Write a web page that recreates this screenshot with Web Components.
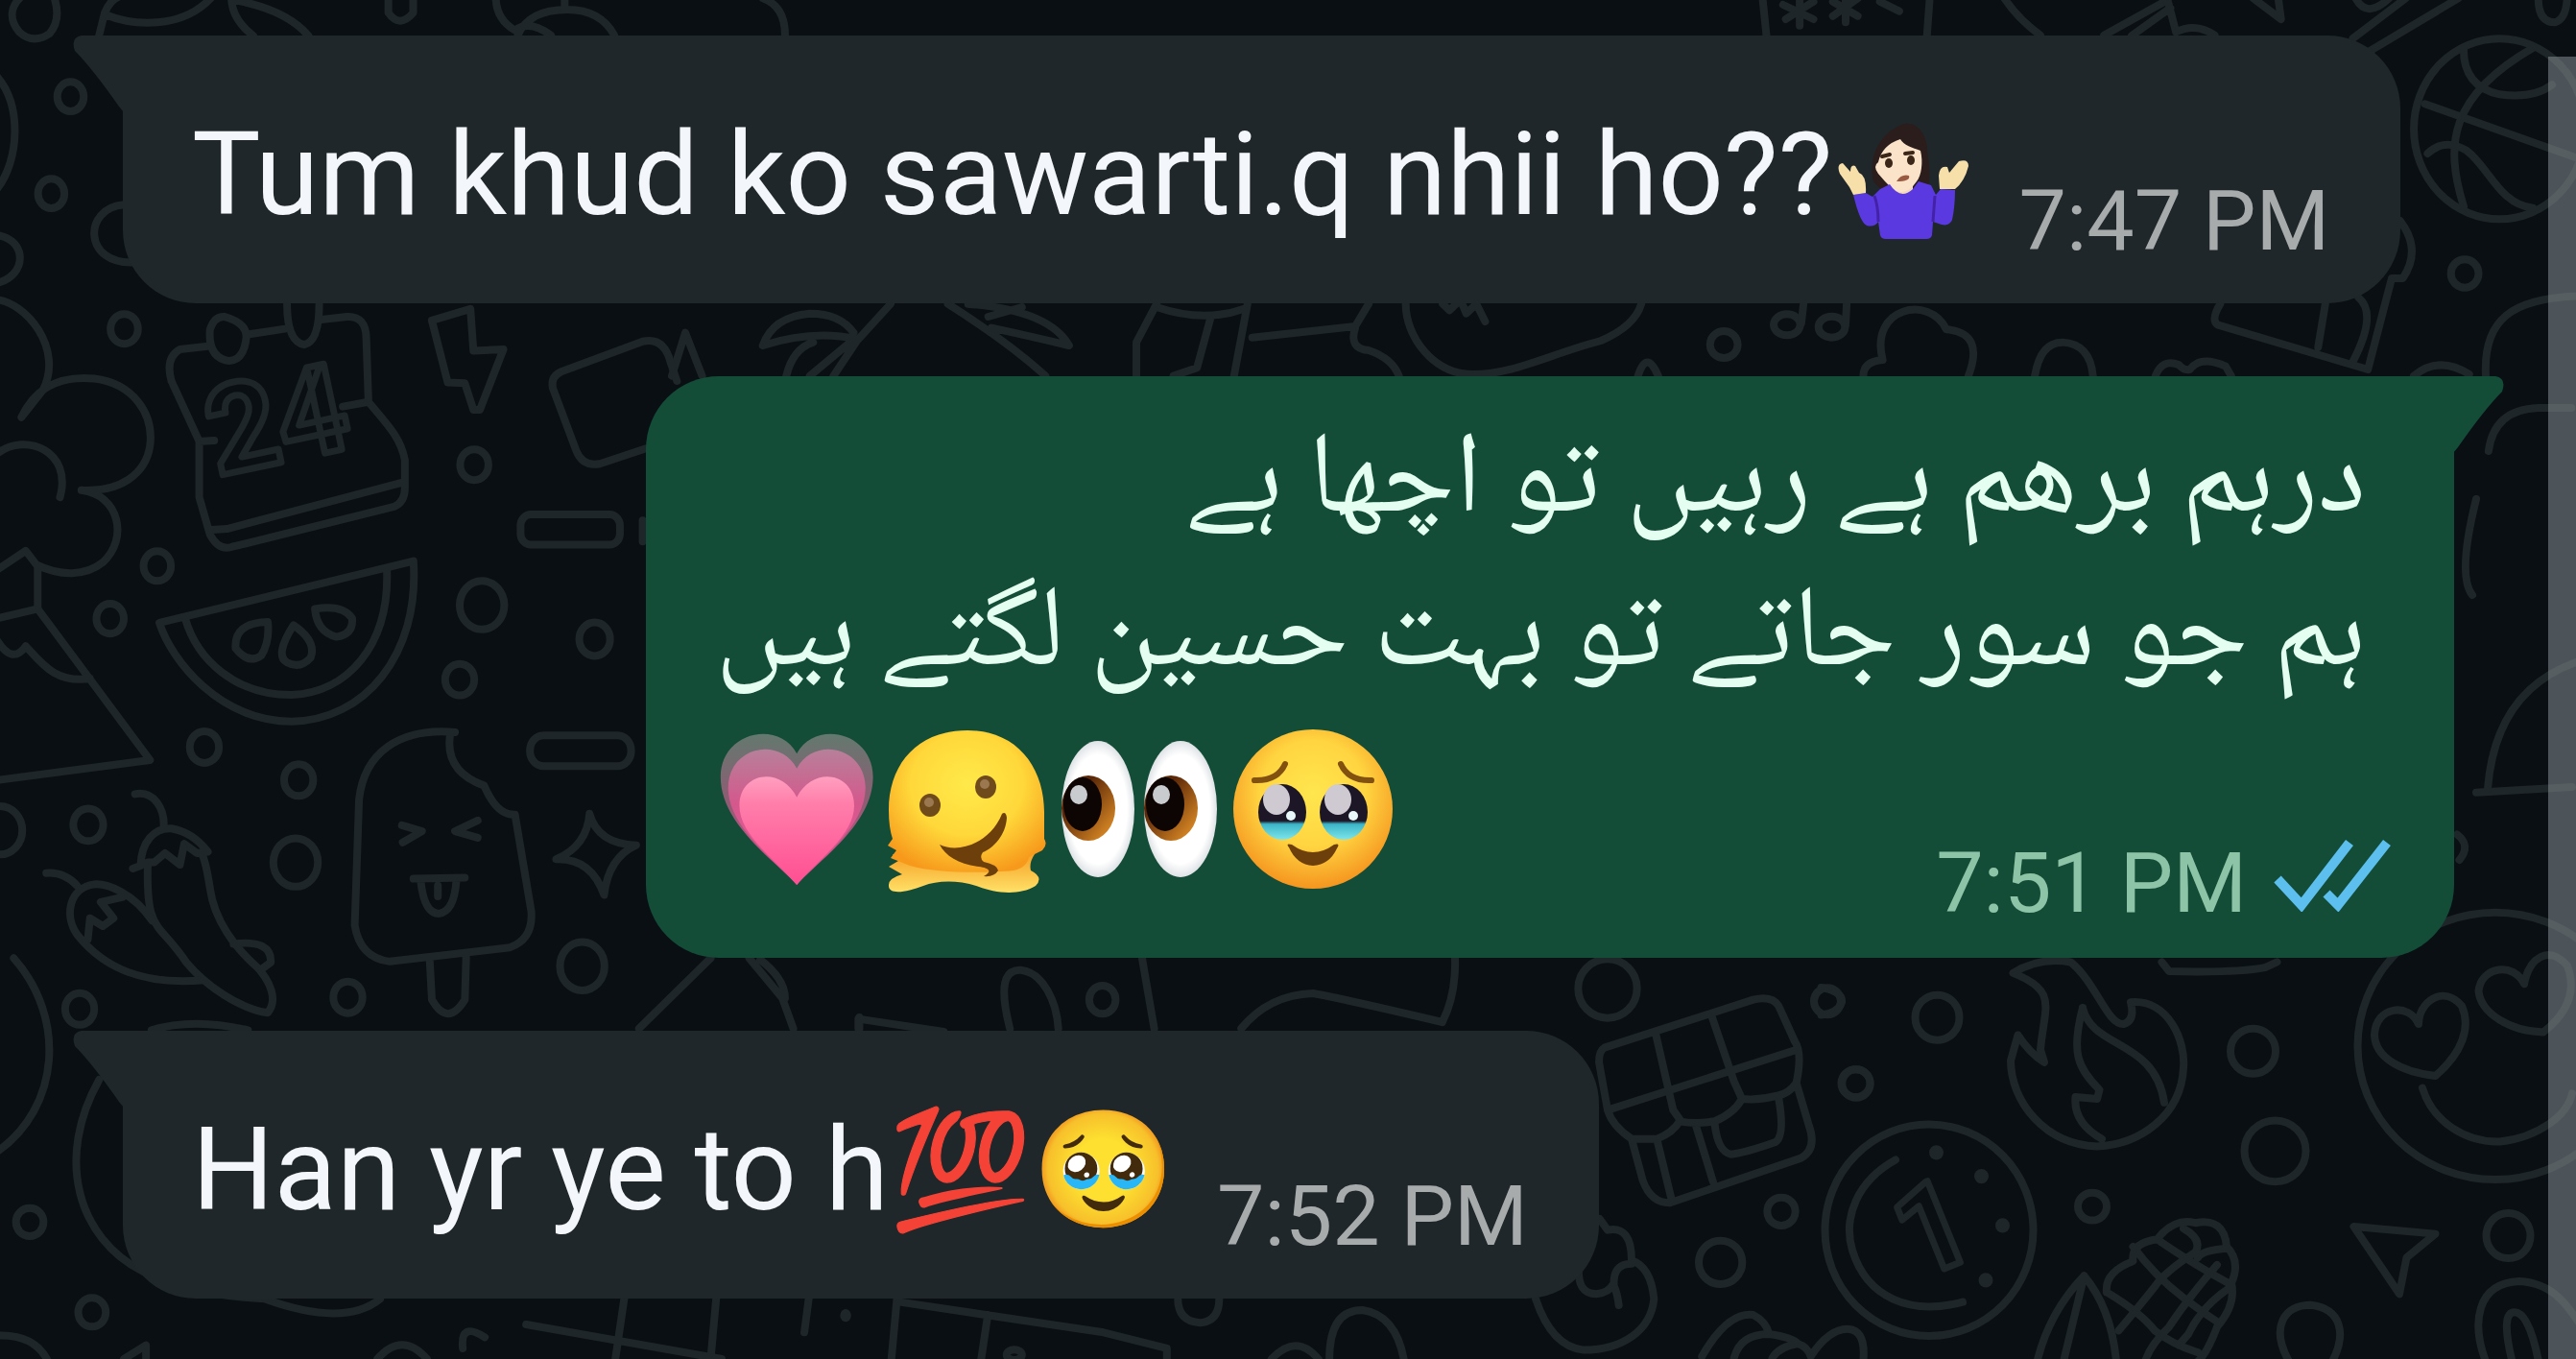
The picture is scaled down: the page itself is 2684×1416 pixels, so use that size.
<!DOCTYPE html>
<html lang="en">
<head>
<meta charset="utf-8">
<meta name="viewport" content="width=device-width, initial-scale=1">
<title>Chat</title>
<style>
  body {
    margin: 0;
    background: #0a0f13;
  }
</style>
</head>
<body>
<chat-screen>
  <chat-bubble side="in" time="7:47 PM">Tum khud ko sawarti.q nhii ho??<big-emoji name="shrug" inline></big-emoji></chat-bubble>
  <chat-bubble side="out" time="7:51 PM" read lang="ur">
    <div dir="rtl">درہم برھم ہے رہیں تو اچھا ہے</div>
    <div dir="rtl">ہم جو سور جاتے تو بہت حسین لگتے ہیں</div>
    <big-emoji slot="emoji" name="heart"></big-emoji>
    <big-emoji slot="emoji" name="melting"></big-emoji>
    <big-emoji slot="emoji" name="eyes"></big-emoji>
    <big-emoji slot="emoji" name="tears"></big-emoji>
  </chat-bubble>
  <chat-bubble side="in" time="7:52 PM">Han yr ye to h💯🥹</chat-bubble>
</chat-screen>

<script>
class ChatWallpaper extends HTMLElement {
  constructor() {
    super();

    const styles = `
    :host {
      display: block;
      overflow: hidden;
    }
    svg {
      display: block;
      width: 100%;
      height: 100%;
      fill: none;
      stroke: #1f262a;
      stroke-width: 8;
      stroke-linecap: round;
      stroke-linejoin: round;
    }
    path, circle, ellipse, rect {
      vector-effect: non-scaling-stroke;
    }
    .dot {
      fill: #1f262a;
      stroke: none;
    }
    text {
      font-family: Roboto, sans-serif;
      font-weight: 700;
      stroke-width: 7;
    }
    `;

    this.attachShadow({ mode: 'open' }).innerHTML = `<style>${styles}</style>
    <svg viewBox="0 0 2684 1416" preserveAspectRatio="xMidYMid slice" aria-hidden="true">
      <!-- top left -->
      <g transform="scale(.574 .3333)">
        <path d="M38-10C20 20 15 60 35 100Q60 140 90 105Q112 60 98-10M180 110L190 40Q200 0 215-10M190 45C240 80 330 95 385-10M420-10Q420 60 460 112M425 0Q520 30 560 112M705-10V40Q725 90 750 40V-10M900-10Q900 60 935 95Q960 60 1000 110M1025-10V25M940 110Q960 30 1030 30Q1090 30 1115 110M1385-5Q1425 20 1425 110"/>
        <ellipse cx="128" cy="302" rx="24" ry="46"/>
        <ellipse cx="93" cy="605" rx="24" ry="46"/>
        <path d="M-5 240C40 330 35 500-5 590M225 640C150 650 150 830 245 820M-5 735C50 750 50 860-5 885"/>
      </g>
      <!-- top right: dice, pencil, basketball, popcorn, notes -->
      <g transform="translate(1780) scale(.5765 .3333)">
        <path d="M98-5L105 112M400-5L395 112M135 15L190 60M190 5L140 60M165-5V80M225 5L270 50M270-5L225 50M248-5V70M310 5L345 35M535-5Q560 60 600 110M715 110L830 0L845 100Q880 70 915 110M765 112L835 25M985-5L1035 60L1030-5M1165 120L1260-5M1190 165L1355-5M1170-5Q1190 60 1230-5M1500-5Q1500 70 1530 70Q1550 60 1552-5"/>
        <ellipse cx="1430" cy="403" rx="155" ry="282"/>
        <path d="M1365 155Q1365 270 1430 295Q1490 310 1525 265M1490 150C1340 300 1330 450 1365 645M1295 325L1580 500M1300 480Q1330 430 1370 470C1410 520 1430 640 1490 650"/>
        <ellipse cx="1367" cy="855" rx="25" ry="44"/>
        <path d="M1250 690Q1290 780 1255 870H1235L1192 1155L920 1015Q908 1000 925 950M1102 1085L1115 950M1165 1130Q1210 980 1175 930"/>
        <ellipse cx="142" cy="1015" rx="24" ry="33"/>
        <ellipse cx="223" cy="1022" rx="24" ry="33"/>
        <path d="M172 950L168 1010M250 950L248 1015M280 1175Q280 1130 315 1125C290 960 400 920 430 1030Q500 1040 470 1175M590 1175Q600 1070 640 1070Q690 1075 695 1175M808 1175Q820 1120 850 1140Q860 1160 870 1155Q890 1110 935 1145L945 1175M1275 1175Q1320 1110 1375 1170M1405 1175C1400 1000 1450 930 1580 925M1410 1410Q1420 1280 1500 1275H1560"/>
        <ellipse cx="28" cy="1077" rx="25" ry="42"/>
      </g>
      <!-- strip between the first two bubbles: palms, trousers -->
      <g transform="translate(700 300) scale(.7015 .3333)">
        <path d="M0 275L20 140L45 275M325 50L275 165L240 275M270 140Q250 80 205 80Q150 90 135 180Q210 130 275 160M170 275Q180 190 210 170M205 275L265 170M410 50Q500 170 555 275M440 50Q560 70 590 180Q530 150 475 125M470 90L520 60M720 50L690 170V275M720 60Q790 110 850 65M800 95L780 250L745 275M855 50L835 275M862 155L1015 120L1035 50M1015 125Q1005 190 1035 195Q1070 220 1080 275M1090 50C1090 150 1130 270 1190 270C1250 270 1300 210 1380 165Q1430 120 1440 50M1145 50L1155 70L1165 50M1175 55L1180 80L1195 50L1208 105M1435 275Q1448 190 1465 275"/>
      </g>
      <!-- left: tree, calendar, bolt, melon, chillies, ice cream -->
      <g transform="translate(0 300) scale(.4464 .4847)">
        <path d="M-10 25C60 30 150 130 100 220L50 278C90 200 160 190 220 195C310 205 360 270 350 340C340 400 280 440 190 435C280 445 300 540 240 590C200 620 140 620 85 595L60 565L-5 605M-5 355C60 310 170 350 140 450M88 600V690L350 1015L-5 1058M-5 710L88 690M-5 760Q30 810 60 770C100 810 130 850 210 840"/>
        <circle cx="290" cy="88" r="32"/>
        <circle cx="367" cy="598" r="32"/>
        <circle cx="257" cy="711" r="32"/>
        <circle cx="477" cy="987" r="34"/>
        <circle cx="697" cy="1058" r="34"/>
        <circle cx="206" cy="1154" r="35"/>
        <circle cx="690" cy="1235" r="52"/>
        <circle cx="0" cy="1166" r="52"/>
        <circle cx="812" cy="1525" r="34"/>
        <circle cx="186" cy="1550" r="34"/>
        <circle cx="1107" cy="380" r="33"/>
        <circle cx="1125" cy="682" r="52"/>
        <circle cx="1388" cy="755" r="36"/>
        <circle cx="1073" cy="842" r="34"/>
        <circle cx="1359" cy="1458" r="52"/>
        <path d="M1500 500V545"/>
        <path d="M490 125L420 132Q385 150 400 200L465 330V450L490 530Q510 565 540 557L920 470Q945 460 945 430V370C935 320 900 290 860 245L855 110Q855 60 810 62L750 68M578 100L665 88M465 330L500 328M800 255L860 245M495 520L530 518L940 418"/>
        <path d="M490 90Q500 60 525 62Q575 75 575 105Q570 155 535 157Q485 150 490 90ZM670 35Q670 115 710 122Q745 115 745 35"/>
        <path d="M1008 70L1098 45L1105 135L1175 132L1120 262H1105L1085 205L1045 203Z"/>
        <path d="M1508 345L1400 378Q1360 385 1345 350L1290 215Q1285 190 1310 180L1500 115Q1550 105 1565 160L1580 200"/>
        <rect x="1215" y="487" width="232" height="65" rx="24"/>
        <rect x="1237" y="962" width="236" height="66" rx="32"/>
        <path d="M372 720L965 587C980 790 850 930 680 932C510 930 400 800 372 720ZM432 710C460 800 550 875 680 875C810 870 910 770 903 605"/>
        <path d="M625 718Q545 720 550 775Q580 810 610 790Q630 760 625 718ZM685 725Q640 790 670 805Q700 820 725 795Q740 760 685 725ZM735 690Q740 740 785 750Q825 745 822 710Q800 680 735 690Z"/>
        <path d="M315 1088C360 1080 385 1120 382 1160M310 1248L328 1242C330 1190 360 1160 400 1162Q450 1170 485 1212L460 1215L430 1195L420 1240L385 1215L360 1235L345 1235C340 1390 370 1360 435 1450C480 1500 560 1550 625 1558C650 1530 630 1490 600 1460C550 1420 500 1360 490 1290Q480 1230 470 1215M545 1410Q635 1400 632 1450L610 1465"/>
        <path d="M108 1258Q150 1255 180 1285M355 1360C310 1300 250 1280 220 1282C160 1290 150 1350 180 1390C240 1460 330 1500 475 1488M205 1400L210 1355L240 1372L265 1355L235 1320L285 1310"/>
        <path d="M1062 955C930 945 850 1000 838 1100L828 1370Q840 1440 910 1448L1190 1418Q1245 1400 1240 1340L1202 1132Q1160 1135 1130 1070Q1040 1040 1050 965M1003 1445L1008 1530Q1045 1590 1085 1530L1088 1440"/>
        <path d="M938 1155L985 1168L940 1192M1115 1145L1062 1168L1115 1182M965 1270L1085 1268M982 1275Q990 1345 1025 1345Q1060 1340 1065 1275M1022 1285V1308"/>
        <path d="M1376 1130Q1395 1195 1485 1198Q1420 1225 1410 1305Q1380 1225 1298 1228Q1370 1200 1376 1130Z"/>
      </g>
      <text x="226" y="496" font-size="128" transform="rotate(-12 226 496)">24</text>
      <!-- bottom left -->
      <g transform="translate(0 1000) scale(.574 .3333)">
        <path d="M25-5C120 180 110 460-5 600M180 375C100 620 140 870 260 975Q350 1050 480 1060C560 1110 640 1130 690 1060M275 220Q350 180 450 220M1160 215L1290-5M1360-5L1420 120L1440 215M1380 0Q1425 60 1425 120M1560 215V180"/>
        <ellipse cx="54" cy="820" rx="25" ry="44"/>
        <ellipse cx="167" cy="1102" rx="25" ry="45"/>
        <path d="M-5 1175Q60 1170 85 1248M225 1248L265 1205V1248M685 1248Q730 1160 775 1248M840 1215Q835 1130 880 1180M955 1140L1310 1248M1133 1060L1117 1248M1300 1060L1290 1248M1468 1060L1460 1165"/>
        <ellipse class="dot" cx="1535" cy="1112" rx="10" ry="20"/>
      </g>
      <!-- bottom middle -->
      <g transform="translate(880 1000) scale(.574 .3333)">
        <path d="M25 215V185L180 225M300 215C280 80 290 30 320 32C360 40 385 130 388 215M540-5L562 215M720 215Q770 110 850 105Q900 120 1085 195M1108-5Q1110 110 1085 195"/>
        <ellipse cx="468" cy="125" rx="24" ry="44"/>
        <path d="M95 1060L85 1248M100 1070L470 1165L585 1215V1248M260 1110L248 1248M605 1060Q605 1130 645 1135Q680 1130 680 1060M775 1248Q820 1165 860 1248M880 1248Q880 1095 940 1095Q1000 1110 1015 1248"/>
        <ellipse cx="308" cy="1235" rx="14" ry="16"/>
      </g>
      <!-- chocolate bar and peach -->
      <g transform="translate(1640 980) scale(.3333)">
        <circle cx="105" cy="150" r="92"/>
        <circle cx="792" cy="190" r="42"/>
        <circle cx="882" cy="447" r="44"/>
        <circle cx="648" cy="847" r="44"/>
        <circle cx="458" cy="1006" r="68"/>
        <path d="M95 335L560 185Q620 170 640 205L690 315Q715 350 695 445L735 580Q760 650 710 680L300 820Q240 820 215 750L180 620Q120 580 105 530L78 380Q78 345 95 335ZM105 530L700 340M255 290L310 530L335 565M430 235L500 440L525 495M180 620H260Q310 600 330 565Q380 575 440 565Q500 540 525 495Q580 500 635 485Q670 480 695 445M260 625L305 810M380 575L435 755M440 575Q450 660 490 668Q530 665 630 630Q660 610 640 495"/>
        <path d="M80 870L105 905Q180 890 180 1000Q240 1020 250 1120C240 1220 150 1280 30 1280Q-70 1270-120 1120M180 1010Q120 1010 125 1080Q135 1100 140 1140M15 1010C10 1080 30 1105 70 1105Q110 1100 122 1075"/>
        <path d="M400 1300Q480 1160 560 1170Q600 1190 610 1230Q520 1230 500 1305M610 1230Q680 1240 700 1260Q640 1270 620 1305M700 1260Q730 1270 740 1300Q800 1210 860 1215Q910 1220 905 1305"/>
      </g>
      <!-- bottom right: fire, coin, corn, plane, smiley -->
      <g transform="translate(1900 820) scale(.5 .3801)">
        <ellipse cx="237" cy="632" rx="46" ry="62"/>
        <ellipse cx="67" cy="812" rx="30" ry="38"/>
        <ellipse cx="895" cy="724" rx="47" ry="62"/>
        <ellipse cx="941" cy="998" rx="64" ry="84"/>
        <ellipse cx="560" cy="1150" rx="30" ry="38"/>
        <ellipse cx="1427" cy="1230" rx="46" ry="62"/>
        <path d="M395 510Q450 465 515 480C570 540 590 650 625 650Q650 640 640 590C720 580 755 700 750 770C745 900 660 980 570 985C460 980 390 860 390 750L405 680Q430 730 460 755L452 720C460 600 490 560 395 510ZM540 605C515 730 530 770 575 830L570 855L525 850Q520 920 580 965M540 605C560 720 690 690 710 865"/>
        <ellipse cx="220" cy="1215" rx="217" ry="290"/>
        <path d="M150 1022C70 1080 40 1180 60 1270C90 1400 180 1450 290 1412"/>
        <ellipse class="dot" cx="235" cy="1002" rx="15" ry="20"/>
        <ellipse class="dot" cx="329" cy="1067" rx="15" ry="20"/>
        <ellipse class="dot" cx="373" cy="1202" rx="15" ry="20"/>
        <ellipse class="dot" cx="338" cy="1352" rx="15" ry="20"/>
        <path d="M705 480L720 505Q860 510 920 495L945 480"/>
        <ellipse cx="1400" cy="710" rx="287" ry="366"/>
        <path d="M1240 650C1220 590 1150 600 1148 680C1150 740 1200 780 1275 792C1330 730 1350 660 1330 600C1290 540 1240 590 1240 650ZM1460 540C1440 480 1370 490 1365 560C1370 620 1430 670 1500 672C1550 620 1570 560 1550 490C1510 430 1470 470 1460 540ZM1248 825C1270 920 1340 975 1410 972C1490 960 1550 900 1560 840M1360 15L1560 0"/>
        <path d="M1320 130Q1350 160 1325 200"/>
        <path d="M1105 1205L1275 1225L1215 1290L1200 1390Z"/>
        <path d="M445 1575Q470 1440 543 1340Q600 1430 610 1575M543 1340L500 1575"/>
        <path d="M590 1385Q585 1330 645 1300Q640 1250 695 1240Q730 1180 775 1195Q835 1180 840 1260Q870 1300 850 1360Q860 1420 820 1480Q800 1550 780 1575M645 1260Q690 1340 750 1400Q790 1440 825 1470M695 1240Q760 1300 850 1365M590 1385Q660 1440 690 1490Q730 1530 780 1550M750 1210Q790 1240 775 1275Q710 1330 690 1370Q660 1420 615 1490M840 1265Q790 1270 780 1290M820 1310Q760 1400 720 1480Q680 1530 670 1575M850 1370Q790 1420 760 1500L740 1530"/>
        <path d="M970 1575C930 1480 960 1420 1015 1420C1080 1430 1090 1500 1060 1575M1380 1575C1350 1470 1360 1360 1450 1355C1530 1360 1560 1440 1600 1520M1435 1575Q1410 1440 1440 1440Q1470 1440 1490 1575M-5 550Q40 560 38 590Q30 620-5 625"/>
      </g>
      <text x="1996" y="1334" font-size="128" transform="rotate(-22 1996 1334)">1</text>
      <!-- right edge -->
      <path d="M2684 690Q2600 720 2592 822M2576 620Q2560 600 2580 520"/>
    </svg>`;
  }
}

customElements.define('chat-wallpaper', ChatWallpaper);

class BigEmoji extends HTMLElement {
  constructor() {
    super();

    const styles = `
    :host {
      display: block;
      width: 178px;
      height: 178px;
    }
    :host([inline]) {
      display: inline-block;
      width: 150px;
      height: 150px;
      vertical-align: -34px;
    }
    svg {
      display: block;
      width: 100%;
      height: 100%;
    }
    `;

    const name = this.getAttribute('name');
    const size = this.hasAttribute('inline') ? 150 : 178;

    this.attachShadow({ mode: 'open' }).innerHTML = `<style>${styles}</style>
    <svg viewBox="0 0 ${size} ${size}" role="img" aria-label="${name}">${BigEmoji.art[name]}</svg>`;
  }

  static art = {
    shrug: `
      <path fill="#2b1d1b" d="M72 23C86 18 98 30 99 48C100 64 104 76 99 90L84 96L52 92L43 82C38 60 46 34 72 23Z"/>
      <path fill="#f3d9b9" d="M62 84H84V98H62Z"/>
      <path fill="#fae3c9" d="M71 38C74 44 84 47 92 50C95 62 93 76 88 82Q80 94 71 93Q64 92 55 82L48 74Q42 66 48 62Q52 44 71 38Z"/>
      <path fill="#5a3ae0" d="M50 90L60 85Q71 102 84 90L90 82L103 86L108 96L113 90L128 91Q128 108 125 122Q122 129 114 127L105 124L104 138Q103 142 98 142H56Q51 142 50 138L48 124Q44 130 36 128Q29 125 22 96L35 94L42 98Z"/>
      <path fill="none" stroke="#4322a8" stroke-width="3" d="M44 97Q48 108 48 124M107 97L105 124"/>
      <path fill="#f6dfa9" d="M22 96L18 88L8 74Q4 64 11 63L19 72Q19 64 24 66L28 73Q36 76 35 94ZM112 90L111 76Q112 65 120 67L122 73L132 61Q142 58 142 66Q138 82 128 90Z"/>
      <path fill="none" stroke="#3a2517" stroke-width="4" stroke-linecap="round" d="M52 56L60 54M76 53L84 52"/>
      <ellipse cx="59" cy="63" rx="4" ry="5" fill="#3a2517"/>
      <ellipse cx="82" cy="60" rx="4" ry="5" fill="#3a2517"/>
      <path fill="#9a5a42" d="M67 82Q72 74 80 76Q82 82 67 82Z"/>`,
    heart: `
      <defs>
        <linearGradient id="a" x2="0" y2="1"><stop stop-color="#63796f"/><stop offset=".45" stop-color="#8e5c73"/><stop offset="1" stop-color="#e0508c"/></linearGradient>
        <linearGradient id="b" x2="0" y2="1"><stop stop-color="#b7809a"/><stop offset=".4" stop-color="#d4588c"/><stop offset="1" stop-color="#f3559a"/></linearGradient>
        <linearGradient id="c" x2="0" y2="1"><stop stop-color="#ff9fc0"/><stop offset=".25" stop-color="#ff7eaa"/><stop offset="1" stop-color="#ff4f92"/></linearGradient>
      </defs>
      <g transform="translate(-2 3) scale(.98 .97)">
        <path fill="url(#a)" d="M89 170C65 143 8 105 8 54C8 6 69-8 89 29C109-8 170 6 170 54C170 105 113 143 89 170Z"/>
        <path fill="url(#b)" d="M89 170C66 143 16 108 16 66C16 22 70 10 89 45C108 10 162 22 162 66C162 108 112 143 89 170Z"/>
        <path fill="url(#c)" d="M89 169C68 144 28 117 28 85C28 49 72 42 89 76C106 42 150 49 150 85C150 117 110 144 89 169Z"/>
      </g>`,
    melting: `
      <defs>
        <radialGradient id="a" cx=".5" cy=".38" r=".65"><stop stop-color="#ffe94a"/><stop offset=".55" stop-color="#ffd83a"/><stop offset="1" stop-color="#f79a1c"/></radialGradient>
        <linearGradient id="b" x2="0" y2="1"><stop stop-color="#f6a126"/><stop offset="1" stop-color="#ffe168"/></linearGradient>
      </defs>
      <g transform="translate(-7 2)">
        <path fill="url(#b)" d="M14 134H162Q156 143 158 151Q172 158 163 167C145 178 120 174 104 168C80 160 60 162 46 167C28 174 9 177 10 166Q10 159 24 155L10 147L20 141Z"/>
        <path fill="url(#a)" d="M10 88C10 40 40 5 92 5C145 5 172 45 172 90L172 118Q176 124 170 130L156 137Q154 148 140 151C110 154 60 154 32 146L12 138L18 130L9 125L14 118Q10 106 10 88Z"/>
        <ellipse cx="53" cy="83" rx="11" ry="12" fill="#6f4b1c"/><circle cx="52" cy="80" r="5" fill="#9b7850"/>
        <ellipse cx="111" cy="64" rx="11" ry="12" fill="#6f4b1c"/><circle cx="110" cy="61" r="5" fill="#9b7850"/>
        <path fill="#6d3f0b" d="M63 124C83 134 116 122 128 92Q132 89 133 96C132 114 119 128 108 132Q104 138 109 142Q123 145 124 151Q120 158 109 157C120 151 112 148 104 147C84 145 69 136 63 124Z"/>
      </g>`,
    eyes: `
      <defs>
        <radialGradient id="w"><stop offset=".8" stop-color="#fff"/><stop offset="1" stop-color="#dfe3e6"/></radialGradient>
        <linearGradient id="i" x2="1" y2="1"><stop offset=".3" stop-color="#5a2708"/><stop offset="1" stop-color="#f09a2a"/></linearGradient>
      </defs>
      <g transform="translate(-5 0)">
        <ellipse cx="48" cy="89" rx="38" ry="71" fill="url(#w)"/>
        <ellipse cx="134" cy="89" rx="38" ry="71" fill="url(#w)"/>
        <ellipse cx="38" cy="88" rx="28" ry="34" fill="url(#i)"/><ellipse cx="32" cy="84" rx="20" ry="28" fill="#0c0504"/><ellipse cx="28" cy="74" rx="9" ry="10" fill="#c9ccce"/>
        <ellipse cx="124" cy="88" rx="28" ry="34" fill="url(#i)"/><ellipse cx="118" cy="84" rx="20" ry="28" fill="#0c0504"/><ellipse cx="114" cy="74" rx="9" ry="10" fill="#c9ccce"/>
      </g>`,
    tears: `
      <defs>
        <radialGradient id="a" cx=".5" cy=".4" r=".6"><stop stop-color="#ffe64e"/><stop offset=".55" stop-color="#ffd541"/><stop offset="1" stop-color="#f5951f"/></radialGradient>
        <linearGradient id="t" x2="0" y2="1"><stop offset=".66" stop-color="#1c1626"/><stop offset=".72" stop-color="#3cb5c8"/><stop offset="1" stop-color="#7fe6ea"/></linearGradient>
      </defs>
      <circle cx="89" cy="89" r="83" fill="url(#a)"/>
      <g fill="none" stroke="#82500f" stroke-width="6" stroke-linecap="round">
        <path d="M28 59Q52 60 60 42M150 59Q126 60 118 42"/>
      </g>
      <ellipse cx="57" cy="92" rx="25" ry="29" fill="url(#t)"/><ellipse cx="51" cy="79" rx="14" ry="16" fill="#cfcad2"/><circle cx="66" cy="96" r="5" fill="#e8f8fa"/>
      <ellipse cx="121" cy="92" rx="25" ry="29" fill="url(#t)"/><ellipse cx="115" cy="79" rx="14" ry="16" fill="#cfcad2"/><circle cx="131" cy="96" r="5" fill="#e8f8fa"/>
      <path fill="#6d3f0b" d="M64 129Q60 124 67 126Q89 142 111 126Q118 124 114 130Q106 147 89 148Q72 147 64 129Z"/>`,
  };
}

customElements.define('big-emoji', BigEmoji);

class ChatBubble extends HTMLElement {
  constructor() {
    super();

    const styles = `
    :host {
      position: relative;
      display: grid;
      grid-template-columns: auto auto;
      align-items: end;
      column-gap: 44px;
      box-sizing: border-box;
      width: max-content;
      border-radius: 76px;
      font-size: 120px;
      line-height: 160px;
    }
    :host([side="in"]) {
      --fill: #1f272a;
      align-self: flex-start;
      padding: 65px 74px 42px 72px;
      border-top-left-radius: 0;
      background: var(--fill);
      color: #f3f6fa;
    }
    :host([side="out"]) {
      --fill: #144d37;
      align-self: flex-end;
      padding: 34px 64px 34px 72px;
      border-top-right-radius: 0;
      background: var(--fill);
      color: #e4fff2;
      font-family: "Noto Naskh Arabic", "DejaVu Sans", sans-serif;
    }
    .tail {
      position: absolute;
      top: 0;
      width: 52px;
      height: 80px;
      fill: var(--fill);
    }
    :host([side="in"]) .tail {
      right: 100%;
    }
    :host([side="out"]) .tail {
      left: 100%;
      transform: scaleX(-1);
    }
    .text {
      white-space: nowrap;
    }
    :host([side="in"]) .text {
      margin-bottom: 12px;
    }
    :host([side="out"]) .text {
      grid-column: 1 / -1;
      margin: 0 28px 8px 0;
    }
    .emoji {
      display: flex;
      margin-bottom: 32px;
    }
    .meta {
      display: flex;
      justify-content: flex-end;
      align-items: flex-end;
      gap: 28px;
      font: 88px/88px Roboto, sans-serif;
      color: #a8abac;
    }
    :host([side="out"]) .meta {
      color: #8dc3a6;
    }
    .ticks {
      width: 124px;
      height: 76px;
      margin-bottom: 14px;
      fill: none;
      stroke: #5cbfee;
      stroke-width: 10;
    }
    `;

    const out = this.getAttribute('side') === 'out';
    const ticks = `<svg class="ticks" viewBox="0 0 124 76" role="img" aria-label="Read"><path d="M4 42L29 69L79 4M55 57L67 69L118 4"/></svg>`;

    this.attachShadow({ mode: 'open' }).innerHTML = `<style>${styles}</style>
    <svg class="tail" viewBox="0 0 52 80" aria-hidden="true"><path d="M53 0H9Q-3 2 2 16Q20 34 48 74L53 80Z"/></svg>
    <div class="text"><slot></slot></div>
    ${out ? '<div class="emoji"><slot name="emoji"></slot></div>' : ''}
    <div class="meta"><time>${this.getAttribute('time')}</time>${this.hasAttribute('read') ? ticks : ''}</div>`;
  }
}

customElements.define('chat-bubble', ChatBubble);

class ChatScreen extends HTMLElement {
  constructor() {
    super();

    const styles = `
    :host {
      position: relative;
      display: block;
      min-height: 100vh;
      box-sizing: border-box;
      overflow: hidden;
      background: #0a0f13;
      font-family: Roboto, sans-serif;
    }
    chat-wallpaper {
      position: absolute;
      inset: 0;
    }
    .thread {
      position: relative;
      display: flex;
      flex-direction: column;
      gap: 76px;
      padding: 37px 127px 60px 128px;
    }
    .scroll-thumb {
      position: absolute;
      top: 59px;
      right: 0;
      bottom: 0;
      width: 29px;
      background: rgba(125, 134, 139, .58);
    }
    `;

    this.attachShadow({ mode: 'open' }).innerHTML = `<style>${styles}</style>
    <chat-wallpaper></chat-wallpaper>
    <div class="thread"><slot></slot></div>
    <div class="scroll-thumb"></div>`;
  }
}

customElements.define('chat-screen', ChatScreen);
</script>
</body>
</html>
